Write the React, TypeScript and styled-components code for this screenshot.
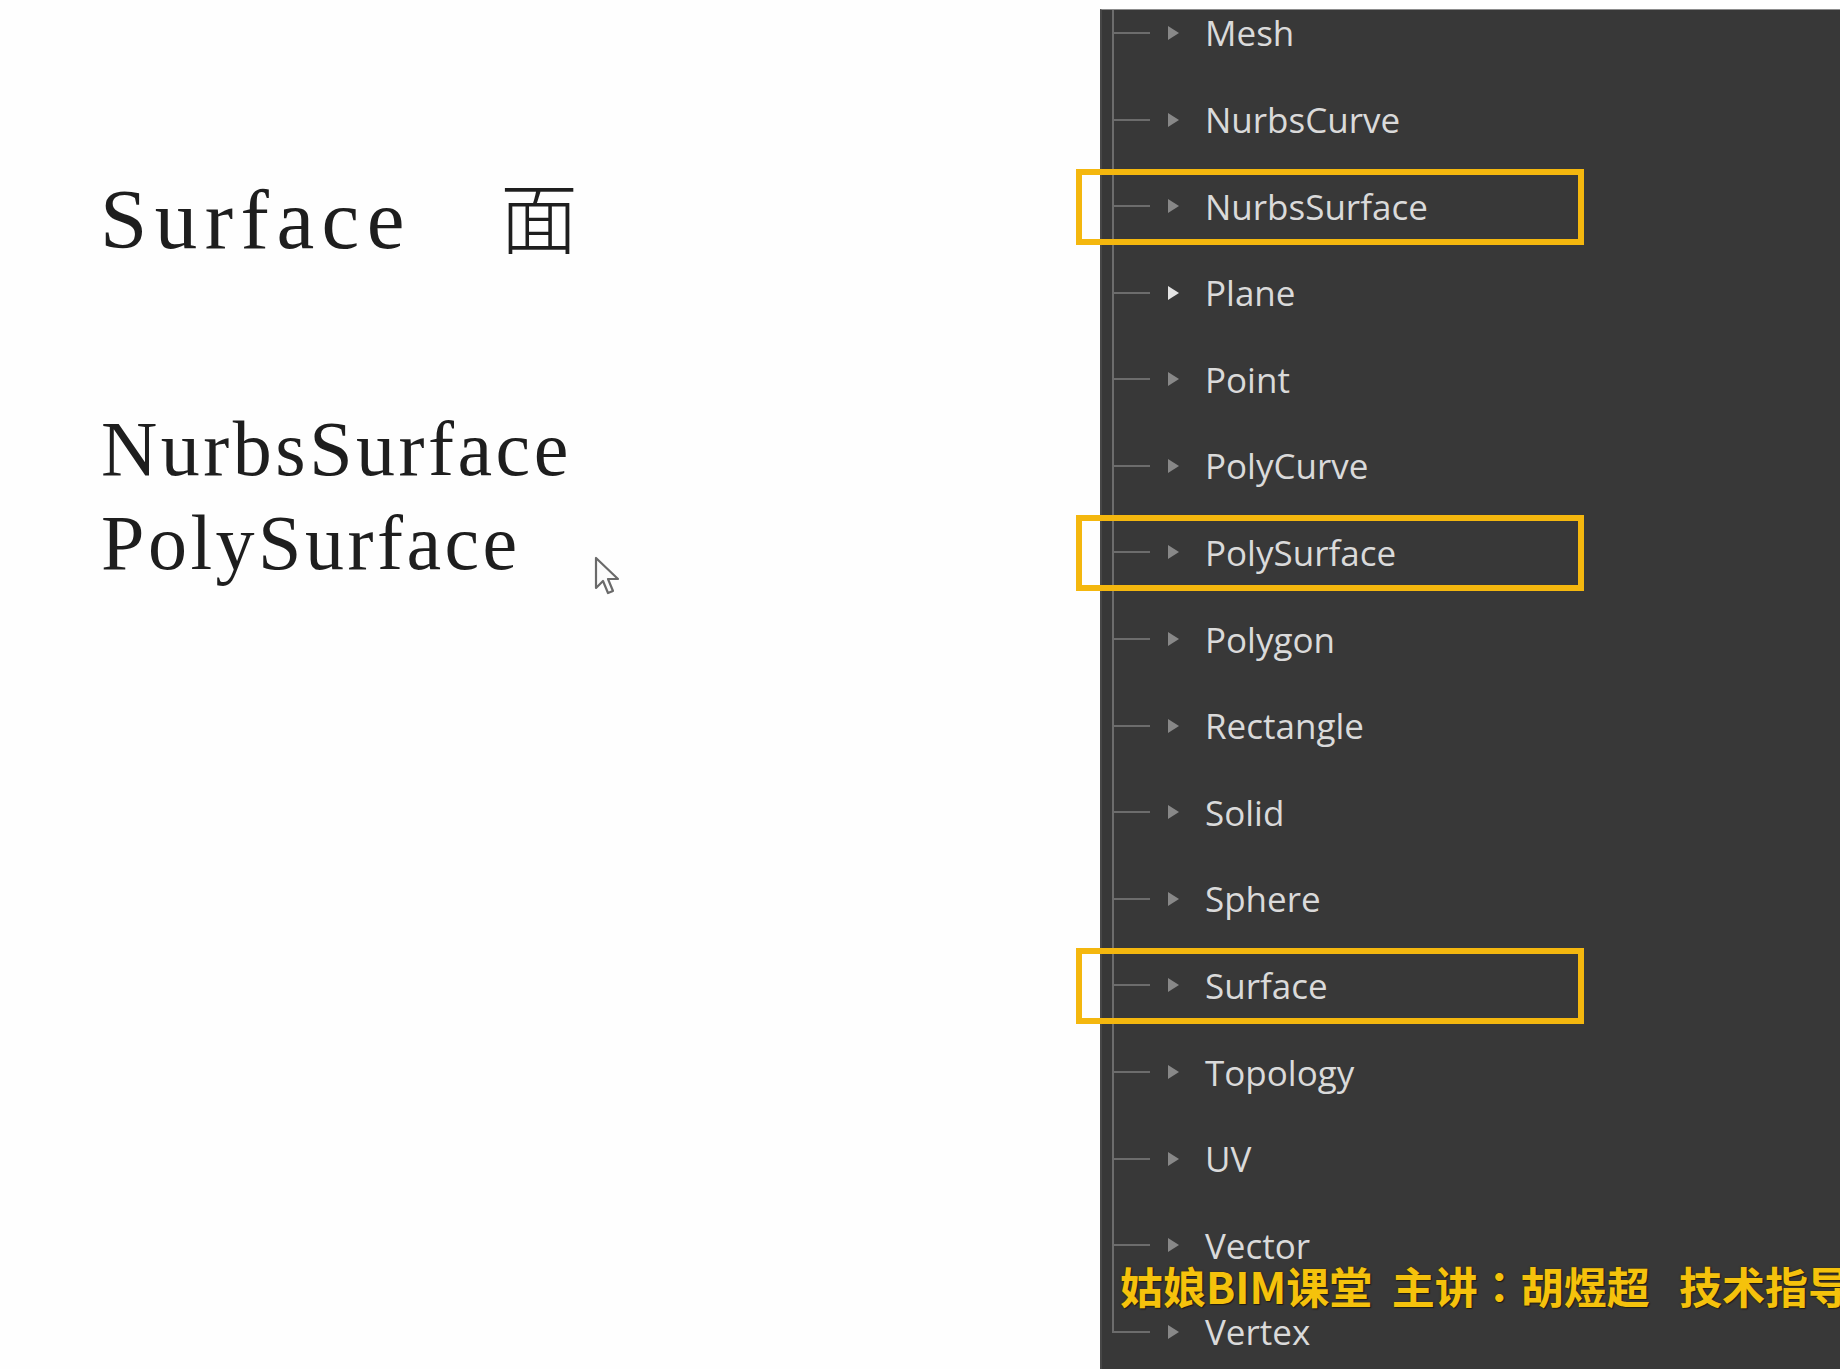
import styled, { createGlobalStyle } from 'styled-components';

const GlobalStyle = createGlobalStyle`
    html, body {
        margin: 0;
        padding: 0;
        background: #fefefe;
    }
`

const Page = styled.div`
    position: relative;
    display: flex;
    width: 1840px;
    height: 1369px;
    overflow: hidden;
    background: #fefefe;
`

const Slide = styled.div`
    width: 1100px;
    flex-shrink: 0;
    display: flex;
    flex-direction: column;
    padding: 170px 0 0 100px;
    box-sizing: border-box;
    color: #1e1e1e;
`

const Title = styled.div`
    display: flex;
    align-items: baseline;
    height: 88px;
    line-height: 88px;
`

const TitleWord = styled.span`
    font-family: "Liberation Serif", serif;
    font-size: 85px;
    letter-spacing: 7.5px;
`

const TitleHan = styled.span`
    margin-left: 88px;
    font-family: "Noto Sans CJK SC", sans-serif;
    font-size: 78px;
    font-weight: 300;
`

const TypeList = styled.div`
    margin-top: 144px;
    display: flex;
    flex-direction: column;
`

const TypeName = styled.div`
    font-family: "Liberation Serif", serif;
    font-size: 78px;
    line-height: 94px;
    letter-spacing: 3.5px;
    margin-left: 1px;
`

const Cursor = styled.svg`
    position: absolute;
    left: 594px;
    top: 556px;
`

const Panel = styled.div`
    flex: 1;
    margin-top: 9px;
    background: #383838;
    border-top: 1px solid #8c8c8c;
    border-left: 2px solid #474747;
`

const Tree = styled.div`
    margin-top: -20.4px;
    display: flex;
    flex-direction: column;
    clip-path: inset(20.4px -60px 0 -60px);
`

const Row = styled.div`
    position: relative;
    height: 86.6px;
    flex-shrink: 0;
    display: flex;
    align-items: center;
    padding-left: 10px;
`

const Branch = styled.div`
    align-self: stretch;
    width: 38px;
    display: flex;
    flex-direction: column;
`

const BranchTop = styled.div`
    flex: 1;
    border-left: 2px solid #6c6c6c;
    border-bottom: 2px solid #6c6c6c;
`

const BranchBottom = styled.div<{ $last?: boolean }>`
    flex: 1;
    border-left: 2px solid ${p => (p.$last ? 'transparent' : '#6c6c6c')};
`

const Arrow = styled.svg`
    margin-left: 17px;
    flex-shrink: 0;
`

const Label = styled.span`
    margin-left: 25px;
    font-family: "Open Sans", sans-serif;
    font-size: 35px;
    color: #dadada;
    line-height: 1;
`

const Highlight = styled.div`
    position: absolute;
    left: -26px;
    top: 6px;
    width: 508px;
    height: 76px;
    box-sizing: border-box;
    border: 6px solid #f4b70e;
`

const Caption = styled.div`
    position: absolute;
    left: 1120px;
    top: 1264px;
    white-space: pre;
    font-family: "Noto Sans CJK SC", sans-serif;
    font-size: 43px;
    font-weight: 700;
    line-height: 1;
    color: #f5c20c;
    text-shadow: 0 0 2px #3a2a00, 1px 1px 1px #1a1a1a;
`

const Colon = styled.span`
    font-family: "Noto Sans CJK TC", sans-serif;
`

const items = [
    'Mesh', 'NurbsCurve', 'NurbsSurface', 'Plane', 'Point', 'PolyCurve', 'PolySurface',
    'Polygon', 'Rectangle', 'Solid', 'Sphere', 'Surface', 'Topology', 'UV', 'Vector', 'Vertex',
]
const marked = ['NurbsSurface', 'PolySurface', 'Surface']

const App = () => {
    return (
        <Page>
            <GlobalStyle />
            <Slide>
                <Title>
                    <TitleWord>Surface</TitleWord>
                    <TitleHan>面</TitleHan>
                </Title>
                <TypeList>
                    <TypeName>NurbsSurface</TypeName>
                    <TypeName>PolySurface</TypeName>
                </TypeList>
            </Slide>
            <Cursor width="30" height="42" viewBox="0 0 30 42">
                <path d="M2 2 L2 32 L9 25 L14 37 L19 35 L14 23 L24 23 Z"
                    fill="#fbfbfb" stroke="#6a6a6a" strokeWidth="2.2" strokeLinejoin="round" />
            </Cursor>
            <Panel>
                <Tree>
                    {items.map((name, i) => (
                        <Row key={name}>
                            <Branch>
                                <BranchTop />
                                <BranchBottom $last={i === items.length - 1} />
                            </Branch>
                            <Arrow width="13" height="16" viewBox="0 0 13 16">
                                <polygon points="1,1 12,8 1,15" fill={name === 'Plane' ? '#e4e4e4' : '#888888'} />
                            </Arrow>
                            <Label>{name}</Label>
                            {marked.includes(name) && <Highlight />}
                        </Row>
                    ))}
                </Tree>
            </Panel>
            <Caption>姑娘BIM课堂  主讲<Colon>：</Colon>胡煜超   技术指导</Caption>
        </Page>
    )
}

export default App
